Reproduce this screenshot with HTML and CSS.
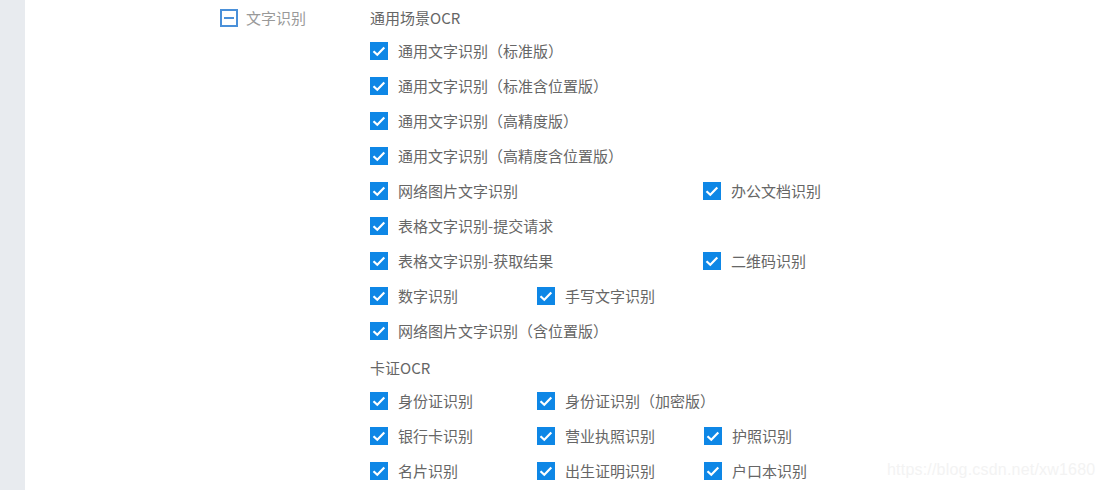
FILE: index.html
```html
<!DOCTYPE html>
<html lang="zh-CN">
<head>
    <meta charset="UTF-8">
    <title>文字识别</title>
    <link rel="stylesheet" href="styles.css">
</head>
<body>
    <div class="sidebar"></div>
    <div class="main">
        <div class="tree-node">
            <div class="node-head">
                <span class="toggle"><span class="minus"></span></span>
                <span class="node-label">文字识别</span>
            </div>
            <div class="node-body">
                <div class="group">
                    <div class="group-title">通用场景OCR</div>
                    <div class="row">
                        <label class="item"><span class="check"></span>通用文字识别（标准版）</label>
                    </div>
                    <div class="row">
                        <label class="item"><span class="check"></span>通用文字识别（标准含位置版）</label>
                    </div>
                    <div class="row">
                        <label class="item"><span class="check"></span>通用文字识别（高精度版）</label>
                    </div>
                    <div class="row">
                        <label class="item"><span class="check"></span>通用文字识别（高精度含位置版）</label>
                    </div>
                    <div class="row">
                        <label class="item span2"><span class="check"></span>网络图片文字识别</label>
                        <label class="item"><span class="check"></span>办公文档识别</label>
                    </div>
                    <div class="row">
                        <label class="item"><span class="check"></span>表格文字识别-提交请求</label>
                    </div>
                    <div class="row">
                        <label class="item span2"><span class="check"></span>表格文字识别-获取结果</label>
                        <label class="item"><span class="check"></span>二维码识别</label>
                    </div>
                    <div class="row">
                        <label class="item"><span class="check"></span>数字识别</label>
                        <label class="item"><span class="check"></span>手写文字识别</label>
                    </div>
                    <div class="row">
                        <label class="item"><span class="check"></span>网络图片文字识别（含位置版）</label>
                    </div>
                </div>
                <div class="group">
                    <div class="group-title">卡证OCR</div>
                    <div class="row">
                        <label class="item"><span class="check"></span>身份证识别</label>
                        <label class="item"><span class="check"></span>身份证识别（加密版）</label>
                    </div>
                    <div class="row">
                        <label class="item"><span class="check"></span>银行卡识别</label>
                        <label class="item"><span class="check"></span>营业执照识别</label>
                        <label class="item"><span class="check"></span>护照识别</label>
                    </div>
                    <div class="row">
                        <label class="item"><span class="check"></span>名片识别</label>
                        <label class="item"><span class="check"></span>出生证明识别</label>
                        <label class="item"><span class="check"></span>户口本识别</label>
                    </div>
                </div>
            </div>
        </div>
    </div>
    <div class="watermark">https://blog.csdn.net/xw1680</div>

    <script>
        // draw the tick inside every checkbox
        const tick = '<svg width="18" height="18" viewBox="0 0 18 18"><path d="M3.5 9.2 L7.3 12.8 L14.3 5.6" fill="none" stroke="#fff" stroke-width="2.2"/></svg>';
        document.querySelectorAll(".check").forEach(box => {
            box.innerHTML = tick;
        });
    </script>
</body>
</html>
```

FILE: styles.css
```css
body {
    margin: 0;
    height: 490px;
    overflow: hidden;
    display: flex;
    background: #fff;
    font-family: "Noto Sans CJK SC", "Microsoft YaHei", sans-serif;
    font-size: 15px;
    color: #666;
}

.sidebar {
    width: 25px;
    flex-shrink: 0;
    background: #e8ebef;
}

.main {
    flex: 1;
    padding: 3px 0 0 195px;
}

.tree-node {
    display: grid;
    grid-template-columns: 150px 1fr;
}

.node-head {
    display: flex;
    align-items: center;
    height: 30px;
    align-self: start;
}

.toggle {
    width: 14px;
    height: 14px;
    border: 2px solid #4a90d9;
    display: flex;
    align-items: center;
    justify-content: center;
    margin-right: 8px;
}

.minus {
    width: 10px;
    height: 2px;
    background: #4a90d9;
}

.node-label {
    color: #999;
    line-height: 30px;
}

.group-title {
    height: 30px;
    line-height: 30px;
}

.group + .group {
    margin-top: 5px;
}

.row {
    display: flex;
    height: 35px;
    align-items: center;
}

.item {
    display: flex;
    align-items: center;
    width: 167px;
    white-space: nowrap;
    line-height: 18px;
}

.item.span2 {
    width: 333px;
}

.row .item:last-child {
    width: auto;
}

.check {
    width: 18px;
    height: 18px;
    background: #0e87e6;
    margin-right: 10px;
    flex-shrink: 0;
}

.check svg {
    display: block;
}

/* blog watermark over the corner */
.watermark {
    position: absolute;
    left: 887px;
    top: 461px;
    font-family: "Liberation Sans", Arial, sans-serif;
    font-size: 16px;
    color: #f3f3f3;
    letter-spacing: 0.2px;
}
```
